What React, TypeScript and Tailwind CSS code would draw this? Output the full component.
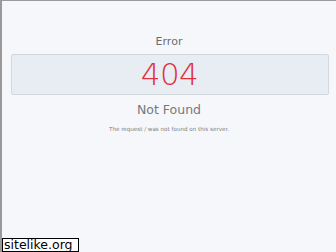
export default function App() {
  return (
    <div
      className="w-[336px] h-[252px] bg-[#f6f7fa] border-t border-l-2 border-[#9a9a9a] flex flex-col items-center relative overflow-hidden"
      style={{ fontFamily: "'DejaVu Sans', sans-serif" }}
    >
      {/* Title */}
      <p className="mt-[34px] text-[11px] leading-[14px] text-[#6a6e74]">Error</p>

      {/* Code box */}
      <div className="mt-[5px] w-[318px] h-[41px] ml-[1px] bg-[#e8edf3] border border-[#d3d8de] rounded-[2px] flex items-center justify-center">
        <span className="text-[31px] leading-none text-[#e0303a] font-extralight tracking-[-0.5px]">404</span>
      </div>

      {/* Status */}
      <p className="mt-[6px] text-[12.5px] leading-[18px] text-[#74787e]">Not Found</p>
      <p className="mt-[6px] text-[5.6px] leading-[8px] text-[#7a7e84]">
        The request / was not found on this server.
      </p>

      {/* Watermark */}
      <div className="absolute left-0 bottom-0 w-[77px] h-[14px] bg-white border border-black flex items-center pl-[1px] text-[12.5px] leading-none text-black">
        sitelike.org
      </div>
    </div>
  );
}
